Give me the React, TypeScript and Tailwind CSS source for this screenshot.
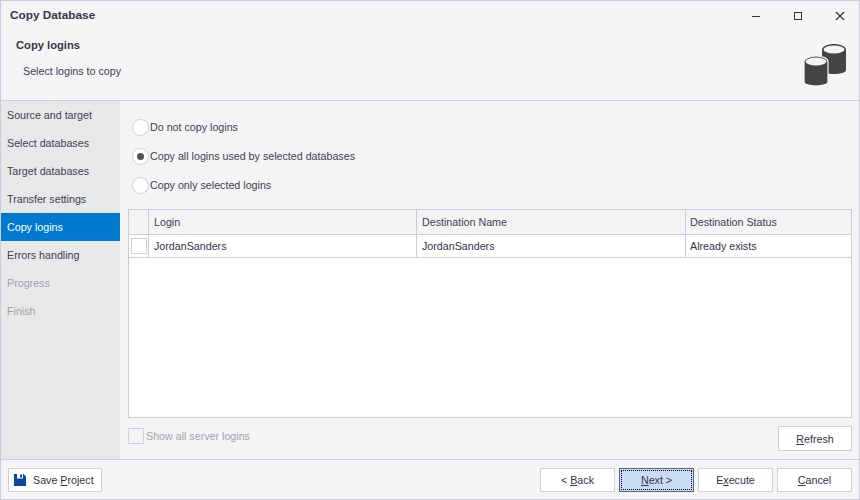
import React from "react";

const font = { fontFamily: '"Liberation Sans", Arial, sans-serif' };
const nav = ["Source and target", "Select databases", "Target databases", "Transfer settings", "Copy logins", "Errors handling", "Progress", "Finish"];

function Radio({ label, on }: { label: string; on?: boolean }) {
  return (
    <div className="flex items-center h-[16px] text-[#3f3f55]">
      <span className="w-[17px] h-[17px] rounded-full bg-white border border-[#cfcfdf] flex items-center justify-center shrink-0">
        {on && <span className="w-[7px] h-[7px] rounded-full bg-[#505050]" />}
      </span>
      <span className="ml-[1px] whitespace-nowrap">{label}</span>
    </div>
  );
}

function Btn({ children, w, primary, className = "" }: { children: React.ReactNode; w: string; primary?: boolean; className?: string }) {
  return (
    <div className={`${w} h-[24px] flex items-center justify-center text-[#33334a] border ${primary ? "bg-[#c9dcf5] border-[#54657f] relative" : "bg-white border-[#cfcfe0]"} ${className}`}>
      {primary && <span className="absolute inset-[1px] border border-dotted border-black" />}
      <span>{children}</span>
    </div>
  );
}

export default function App() {
  return (
    <div className="w-[860px] h-[500px] flex flex-col bg-[#f4f4f4] border border-[#cbcbdf] text-[10.7px] leading-[14px] text-[#3f3f55] overflow-hidden" style={font}>
      <div className="h-[100px] shrink-0 flex bg-[#f5f5f5] border-b border-[#cbcbdf]">
        <div className="flex-1 flex flex-col">
          <div className="font-bold text-[11.8px] text-[#38384a] pl-[9px] pt-[7px]">Copy Database</div>
          <div className="font-bold text-[11.2px] text-[#38384a] pl-[15px] pt-[16px]">Copy logins</div>
          <div className="pl-[22px] pt-[12px]">Select logins to copy</div>
        </div>
        <div className="w-[140px] shrink-0 flex flex-col items-end relative">
          <div className="flex h-[30px] items-center">
            <div className="w-[42px] flex justify-center">
              <svg width="10" height="10" viewBox="0 0 10 10"><path d="M1 5.500h8" stroke="#333" strokeWidth="1" /></svg>
            </div>
            <div className="w-[42px] flex justify-center">
              <svg width="10" height="10" viewBox="0 0 10 10"><rect x="1.500" y="1.500" width="7" height="7" fill="none" stroke="#333" /></svg>
            </div>
            <div className="w-[40px] flex justify-center pl-[2px]">
              <svg width="10" height="10" viewBox="0 0 10 10"><path d="M1 1l8 8M9 1l-8 8" stroke="#333" strokeWidth="1.200" /></svg>
            </div>
          </div>
          <div className="pr-[12px] pt-[12px]">
            <svg width="44" height="44" viewBox="0 0 44 44" className="block">
              <path d="M19 6.500C19 3.500 24.500 1 31 1s12 2.500 12 5.500V27c0 2.400-5.500 4-12 4s-12-1.600-12-4z" fill="#444" />
              <ellipse cx="31" cy="6.500" rx="10.500" ry="4" fill="#f5f5f5" />
              <path d="M1 18.500C1 15.500 6.500 13 13 13s12 2.500 12 5.500V39c0 2.400-5.500 4-12 4S1 41.400 1 39z" fill="#444" stroke="#f5f5f5" strokeWidth="1.200" />
              <ellipse cx="13" cy="18.500" rx="10.500" ry="4" fill="#f5f5f5" />
            </svg>
          </div>
        </div>
      </div>
      <div className="flex-1 flex min-h-0">
        <div className="w-[119px] shrink-0 bg-[#e8e8e8]">
          {nav.map((n, i) => (
            <div key={n} className={`h-[28px] flex items-center pl-[6px] ${i === 4 ? "bg-[#0079ce] text-white" : i > 5 ? "text-[#a2a2ac]" : ""}`}>{n}</div>
          ))}
        </div>
        <div className="flex-1 flex flex-col pl-[8px] pr-[7px]">
          <div className="flex flex-col gap-[13px] pl-[4px] pt-[18px]">
            <Radio label="Do not copy logins" />
            <Radio label="Copy all logins used by selected databases" on />
            <Radio label="Copy only selected logins" />
          </div>
          <div className="mt-[16px] h-[209px] bg-white border border-[#cbcbdf] flex flex-col">
            <div className="h-[25px] flex bg-[#f4f4f4] border-b border-[#cbcbdf]">
              <div className="w-[20px] border-r border-[#cbcbdf]" />
              <div className="w-[268px] border-r border-[#cbcbdf] flex items-center pl-[5px]">Login</div>
              <div className="w-[269px] border-r border-[#cbcbdf] flex items-center pl-[5px]">Destination Name</div>
              <div className="flex-1 flex items-center pl-[4px]">Destination Status</div>
            </div>
            <div className="h-[23px] flex border-b border-[#cbcbdf] text-[#33334a]">
              <div className="w-[20px] border-r border-[#cbcbdf] flex items-center pl-[2px]">
                <span className="w-[16px] h-[16px] border border-[#cfcfdf] bg-white" />
              </div>
              <div className="w-[268px] border-r border-[#cbcbdf] flex items-center pl-[5px]">JordanSanders</div>
              <div className="w-[269px] border-r border-[#cbcbdf] flex items-center pl-[5px]">JordanSanders</div>
              <div className="flex-1 flex items-center pl-[4px]">Already exists</div>
            </div>
          </div>
          <div className="flex items-start justify-between mt-[8px]">
            <div className="flex items-center h-[20px] text-[#a2a2ac]">
              <span className="w-[16px] h-[16px] border border-[#cfcfdf] bg-[#f4f4f4] mr-[2px]" />
              Show all server logins
            </div>
            <Btn w="w-[74px]" className="h-[25px]"><u>R</u>efresh</Btn>
          </div>
        </div>
      </div>
      <div className="h-[40px] shrink-0 bg-[#f4f4f4] border-t border-[#cbcbdf] flex items-center pl-[7px] pr-[7px]">
        <div className="w-[94px] h-[24px] bg-white border border-[#cfcfe0] flex items-center pl-[4px] text-[#33334a]">
          <svg width="14" height="14" viewBox="0 0 14 14" className="shrink-0"><path d="M1 1h9.500l2.500 2.500V13H1z" fill="#0a4a9c" /><rect x="4" y="1" width="6" height="4.500" fill="#ffffff" /><rect x="7" y="1.500" width="2" height="3" fill="#0a4a9c" /></svg>
          <span className="ml-[6px] whitespace-nowrap">Save <u>P</u>roject</span>
        </div>
        <div className="flex-1" />
        <div className="flex gap-[4px]">
          <Btn w="w-[75px]">&lt; <u>B</u>ack</Btn>
          <Btn w="w-[75px]" primary><u>N</u>ext &gt;</Btn>
          <Btn w="w-[75px]">E<u>x</u>ecute</Btn>
          <Btn w="w-[75px]"><u>C</u>ancel</Btn>
        </div>
      </div>
    </div>
  );
}
